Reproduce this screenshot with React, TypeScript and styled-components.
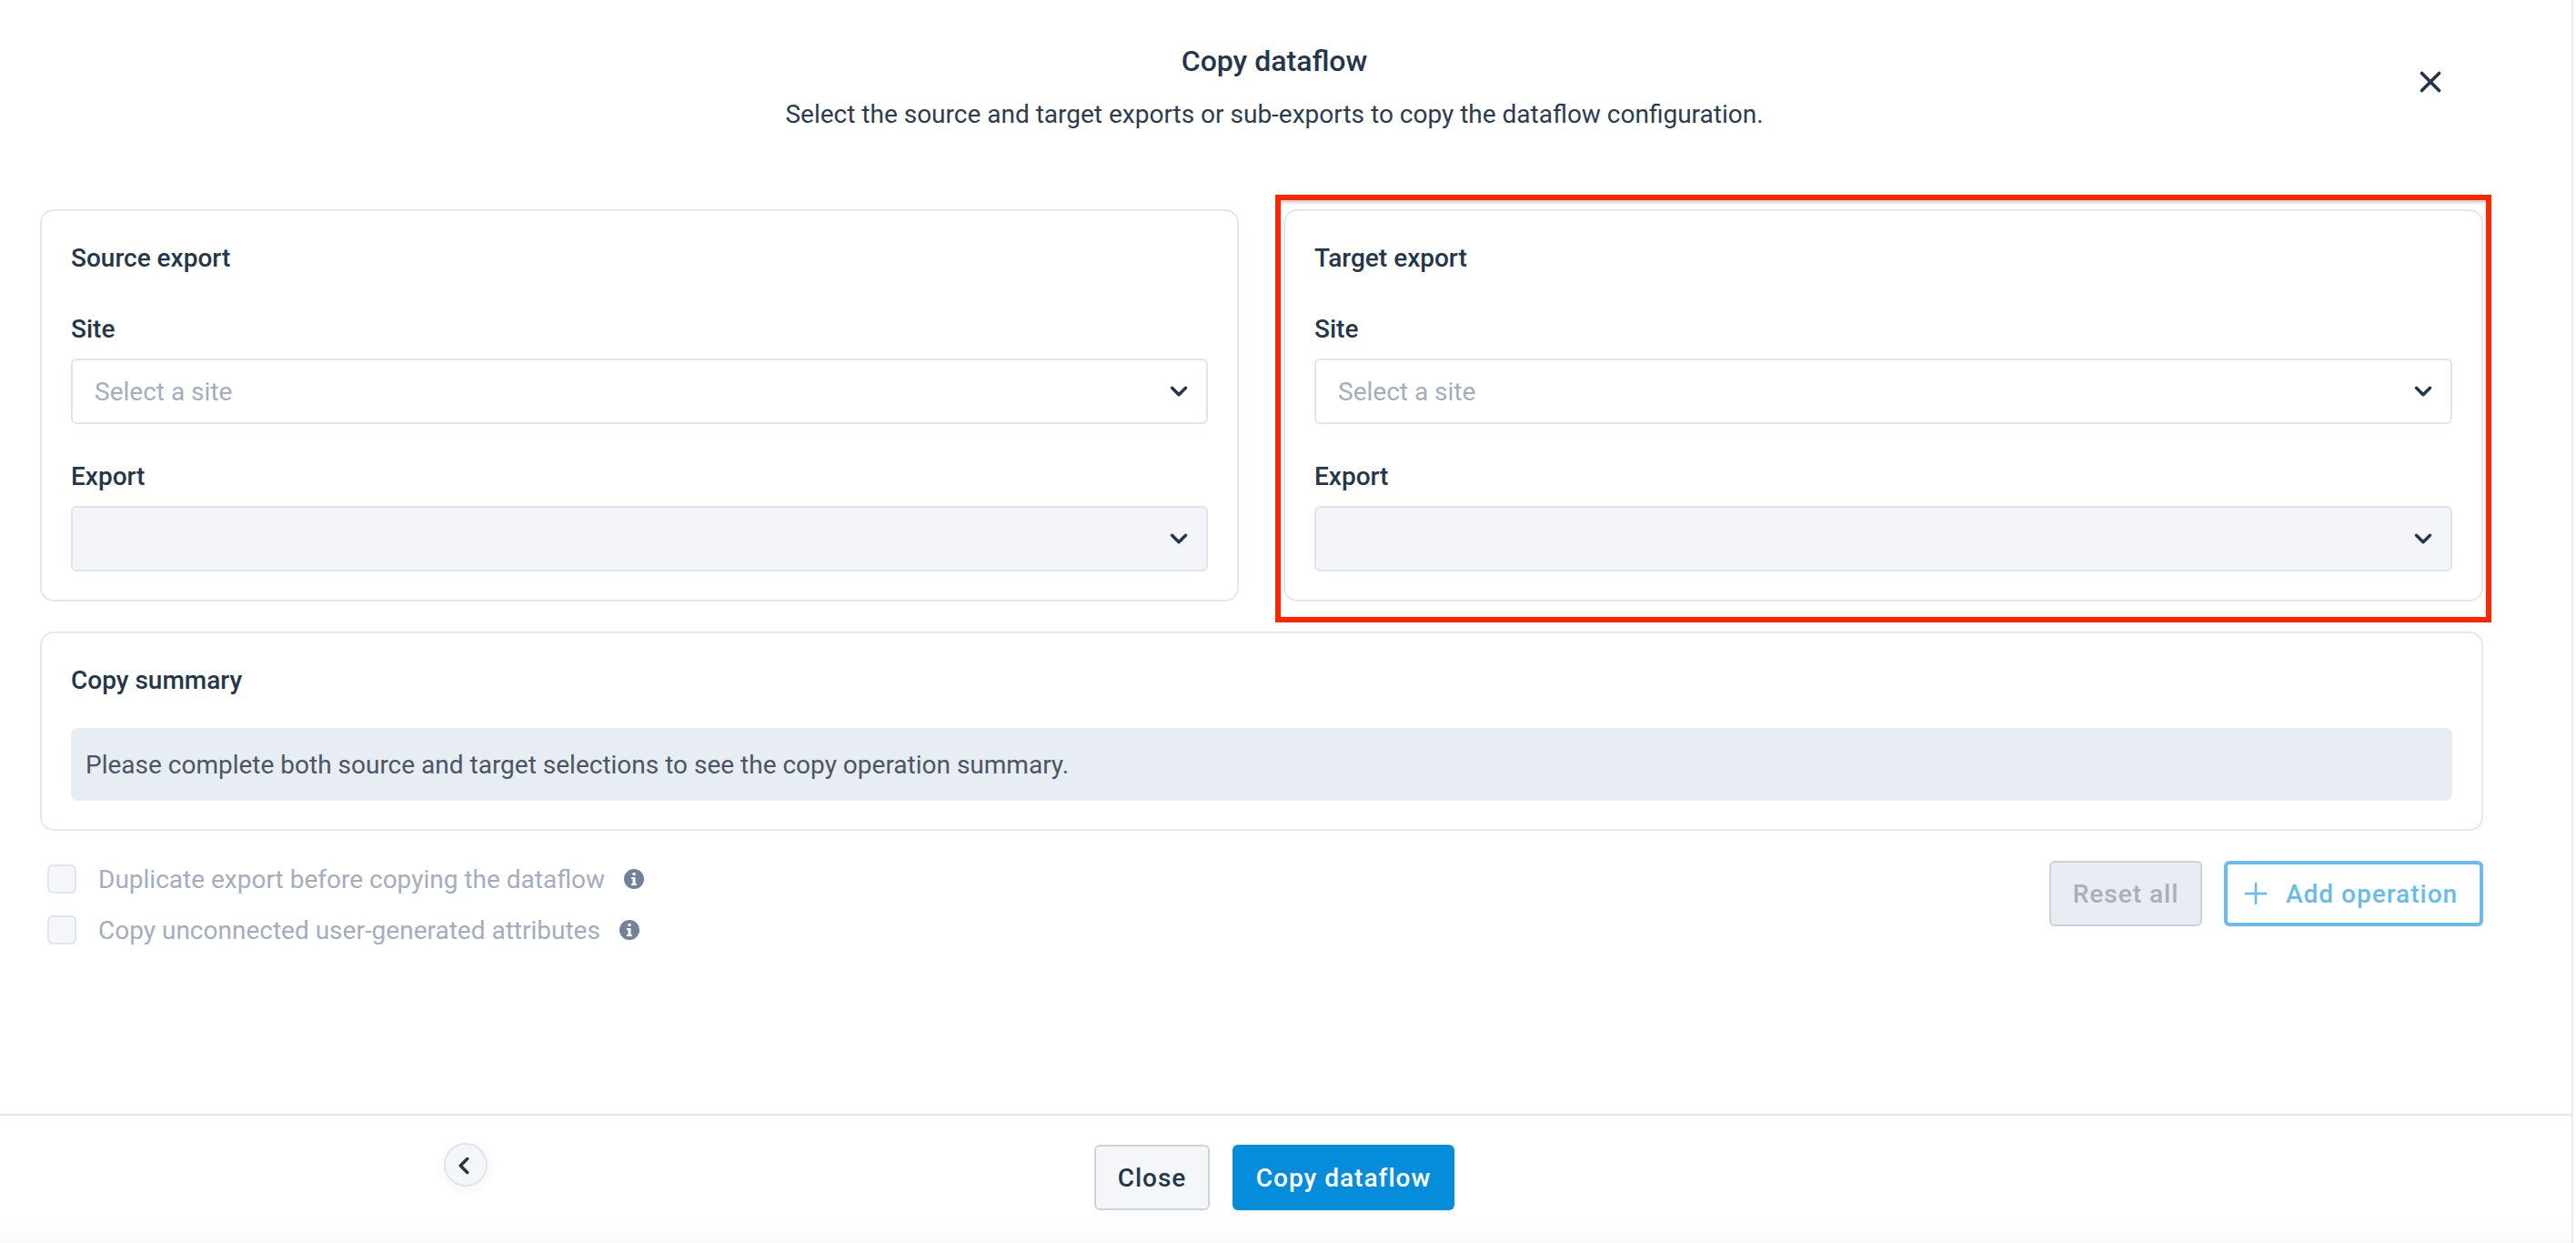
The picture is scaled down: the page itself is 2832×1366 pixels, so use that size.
import React from 'react'
import styled, { createGlobalStyle } from 'styled-components'
import { ChevronDown, ChevronLeft, Plus, X } from 'lucide-react'

const GlobalStyle = createGlobalStyle`
  html, body {
    margin: 0;
    padding: 0;
    background: #fff;
  }
  * {
    box-sizing: border-box;
  }
`

const Page = styled.div`
  position: relative;
  width: 2832px;
  height: 1366px;
  overflow: hidden;
  background: #fff;
  font-family: Roboto, "Liberation Sans", sans-serif;
  color: #26364a;
`

const Panel = styled.div`
  display: flex;
  flex-direction: column;
  width: 2829px;
  height: 100%;
  border-right: 2px solid #ebebeb;
`

const Header = styled.header`
  display: grid;
  grid-template-columns: 1fr auto 1fr;
  width: 2802px;
  height: 230px;
  padding-top: 46px;
`

const HeaderText = styled.div`
  grid-column: 2;
  text-align: center;
`

const Title = styled.h1`
  margin: 0;
  font-size: 32px;
  line-height: 42px;
  font-weight: 500;
`

const Subtitle = styled.p`
  margin: 19px 0 0;
  font-size: 28px;
  line-height: 38px;
  font-weight: 400;
  color: #2d3b4e;
`

const CloseIcon = styled.button`
  grid-column: 3;
  justify-self: end;
  align-self: start;
  display: flex;
  margin: 25px 111px 0 0;
  padding: 0;
  border: 0;
  background: none;
  color: #26364a;
`

const Content = styled.main`
  display: flex;
  flex-direction: column;
  gap: 33px;
  padding: 0 97px 0 44px;
`

const CardRow = styled.div`
  display: grid;
  grid-template-columns: 1318px 1319px;
  gap: 49px;
`

const Card = styled.section`
  padding: 35px 32px 31px;
  border: 2px solid #e2e7f0;
  border-radius: 15px;
`

const CardTitle = styled.h2`
  margin: 0;
  font-size: 28px;
  line-height: 34px;
  font-weight: 500;
`

const FieldLabel = styled.label<{ $first?: boolean }>`
  display: block;
  margin: ${(p) => (p.$first ? '45px' : '42px')} 0 16px;
  font-size: 28px;
  line-height: 32px;
  font-weight: 500;
`

const SelectBox = styled.div<{ $disabled?: boolean }>`
  display: flex;
  align-items: center;
  justify-content: space-between;
  height: 72px;
  padding: 0 15px 0 24px;
  border: 2px solid #e0e5ed;
  border-radius: 6px;
  background: ${(p) => (p.$disabled ? '#f3f5f9' : '#fff')};
  font-size: 28px;
  color: #a5adba;
`

const SummaryBox = styled.div`
  display: flex;
  align-items: center;
  height: 80px;
  margin-top: 35px;
  padding-left: 16px;
  border-radius: 8px;
  background: #e8ecf3;
  font-size: 28px;
  color: #4a5666;
`

const OptionsRow = styled.div`
  display: flex;
  justify-content: space-between;
  align-items: flex-start;
`

const Options = styled.div`
  display: flex;
  flex-direction: column;
  gap: 24px;
  padding: 4px 0 0 8px;
`

const Option = styled.div`
  display: flex;
  align-items: center;
  height: 32px;
  font-size: 28px;
  color: #a3adbd;
`

const Checkbox = styled.span`
  width: 32px;
  height: 32px;
  margin-right: 24px;
  border: 2px solid #e0e6ef;
  border-radius: 6px;
  background: #f4f6fa;
`

const InfoIcon = styled.svg`
  width: 22px;
  height: 22px;
  margin-left: 21px;
`

const Actions = styled.div`
  display: flex;
  gap: 24px;
`

const Button = styled.button`
  display: flex;
  align-items: center;
  height: 72px;
  font-family: inherit;
  font-size: 28px;
  font-weight: 500;
  letter-spacing: 1px;
  border-radius: 6px;
  white-space: nowrap;
`

const ResetButton = styled(Button)`
  width: 168px;
  padding: 0;
  justify-content: center;
  border: 2px solid #ccd1db;
  background: #e8ecf3;
  color: #a8aeba;
`

const AddButton = styled(Button)`
  width: 285px;
  padding: 0 0 0 12px;
  gap: 14px;
  border: 4px solid #6abbea;
  background: #fff;
  color: #6abbea;
`

const Footer = styled.footer`
  display: grid;
  grid-template-columns: 1fr auto 1fr;
  margin-top: auto;
  height: 142px;
  padding: 32px 25px 0 0;
  border-top: 2px solid #e2e6ef;
  background: linear-gradient(#fff 78%, #fafafa);
`

const CollapseButton = styled.button`
  justify-self: start;
  display: flex;
  align-items: center;
  justify-content: center;
  width: 48px;
  height: 48px;
  margin: -2px 0 0 488px;
  padding: 2px 5px 0 0;
  border: 2px solid #dfe5ee;
  border-radius: 50%;
  background: #f4f6fa;
  color: #26364a;
  box-shadow: 0 2px 14px rgba(40, 60, 90, 0.07);
`

const FooterActions = styled.div`
  grid-column: 2;
  display: flex;
  gap: 25px;
`

const CloseButton = styled(Button)`
  width: 127px;
  padding: 0;
  justify-content: center;
  border: 2px solid #cdd3dd;
  background: #f4f6fa;
  color: #26364a;
`

const CopyButton = styled(Button)`
  width: 244px;
  padding: 0;
  justify-content: center;
  border: 0;
  background: #058cdb;
  color: #fff;
`

const Highlight = styled.div`
  position: absolute;
  left: 1402px;
  top: 214px;
  width: 1337px;
  height: 470px;
  border: 6px solid #ff2600;
  box-shadow: inset 0 3px 3px rgba(60, 70, 90, 0.25);
  pointer-events: none;
`

const Info = () => (
  <InfoIcon viewBox="0 0 22 22">
    <circle cx="11" cy="11" r="11" fill="#718399" />
    <rect x="9.5" y="4" width="3" height="3" fill="#fff" />
    <path d="M8 9h4.5v7H14v2H8v-2h1.5v-5H8z" fill="#fff" />
  </InfoIcon>
)

const ExportCard = ({ title }: { title: string }) => (
  <Card>
    <CardTitle>{title}</CardTitle>
    <FieldLabel $first>Site</FieldLabel>
    <SelectBox>
      Select a site
      <ChevronDown size={30} strokeWidth={2.8} color="#26364a" />
    </SelectBox>
    <FieldLabel>Export</FieldLabel>
    <SelectBox $disabled>
      <span />
      <ChevronDown size={30} strokeWidth={2.8} color="#26364a" />
    </SelectBox>
  </Card>
)

export default function App() {
  return (
    <Page>
      <GlobalStyle />
      <Panel>
        <Header>
          <HeaderText>
            <Title>Copy dataflow</Title>
            <Subtitle>Select the source and target exports or sub-exports to copy the dataflow configuration.</Subtitle>
          </HeaderText>
          <CloseIcon>
            <X size={38} strokeWidth={2.3} />
          </CloseIcon>
        </Header>
        <Content>
          <CardRow>
            <ExportCard title="Source export" />
            <ExportCard title="Target export" />
          </CardRow>
          <Card>
            <CardTitle>Copy summary</CardTitle>
            <SummaryBox>Please complete both source and target selections to see the copy operation summary.</SummaryBox>
          </Card>
          <OptionsRow>
            <Options>
              <Option>
                <Checkbox />
                Duplicate export before copying the dataflow
                <Info />
              </Option>
              <Option>
                <Checkbox />
                Copy unconnected user-generated attributes
                <Info />
              </Option>
            </Options>
            <Actions>
              <ResetButton>Reset all</ResetButton>
              <AddButton>
                <Plus size={38} strokeWidth={1.6} />
                Add operation
              </AddButton>
            </Actions>
          </OptionsRow>
        </Content>
        <Footer>
          <CollapseButton>
            <ChevronLeft size={30} strokeWidth={2.8} />
          </CollapseButton>
          <FooterActions>
            <CloseButton>Close</CloseButton>
            <CopyButton>Copy dataflow</CopyButton>
          </FooterActions>
        </Footer>
      </Panel>
      <Highlight />
    </Page>
  )
}
